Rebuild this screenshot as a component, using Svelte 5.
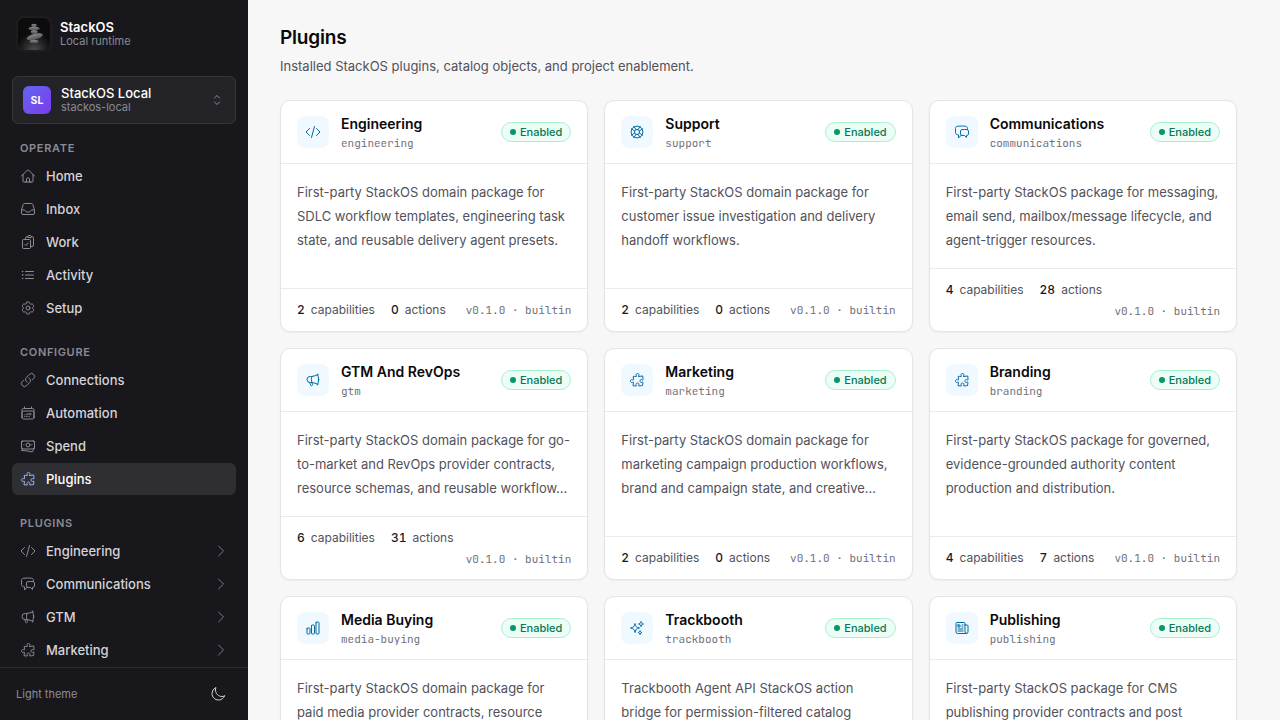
<script>
  // 24x24 outline icons, drawn with a 1.5 stroke
  const icons = {
    home: 'm2.25 12 8.954-8.955c.44-.439 1.152-.439 1.591 0L21.75 12M4.5 9.75v10.125c0 .621.504 1.125 1.125 1.125H9.75v-4.875c0-.621.504-1.125 1.125-1.125h2.25c.621 0 1.125.504 1.125 1.125V21h4.125c.621 0 1.125-.504 1.125-1.125V9.75M8.25 21h8.25',
    inbox: 'M2.25 13.5h3.86a2.25 2.25 0 0 1 2.012 1.244l.256.512a2.25 2.25 0 0 0 2.013 1.244h3.218a2.25 2.25 0 0 0 2.013-1.244l.256-.512a2.25 2.25 0 0 1 2.013-1.244h3.859m-19.5.338V18a2.25 2.25 0 0 0 2.25 2.25h15A2.25 2.25 0 0 0 21.75 18v-4.162c0-.224-.034-.447-.1-.661L19.24 5.338a2.25 2.25 0 0 0-2.15-1.588H6.911a2.25 2.25 0 0 0-2.15 1.588L2.35 13.177a2.25 2.25 0 0 0-.1.661Z',
    work: 'M11.35 3.836c-.065.21-.1.433-.1.664 0 .414.336.75.75.75h4.5a.75.75 0 0 0 .75-.75 2.25 2.25 0 0 0-.1-.664m-5.8 0A2.251 2.251 0 0 1 13.5 2.25H15c1.012 0 1.867.668 2.15 1.586m-5.8 0c-.376.023-.75.05-1.124.08C9.095 4.01 8.25 4.973 8.25 6.108V8.25m8.9-4.414c.376.023.75.05 1.124.08 1.131.094 1.976 1.057 1.976 2.192V16.5A2.25 2.25 0 0 1 18 18.75h-2.25m-7.5-10.5H4.875c-.621 0-1.125.504-1.125 1.125v11.25c0 .621.504 1.125 1.125 1.125h9.75c.621 0 1.125-.504 1.125-1.125V18.75m-7.5-10.5h6.375c.621 0 1.125.504 1.125 1.125v9.375m-8.25-3 1.5 1.5 3-3.75',
    list: 'M8.25 6.75h12M8.25 12h12m-12 5.25h12M3.75 6.75h.007v.008H3.75V6.75Zm.375 0a.375.375 0 1 1-.75 0 .375.375 0 0 1 .75 0ZM3.75 12h.007v.008H3.75V12Zm.375 0a.375.375 0 1 1-.75 0 .375.375 0 0 1 .75 0Zm-.375 5.25h.007v.008H3.75v-.008Zm.375 0a.375.375 0 1 1-.75 0 .375.375 0 0 1 .75 0Z',
    cog: 'M9.594 3.94c.09-.542.56-.94 1.11-.94h2.593c.55 0 1.02.398 1.11.94l.213 1.281c.063.374.313.686.645.87.074.04.147.083.22.127.325.196.72.257 1.075.124l1.217-.456a1.125 1.125 0 0 1 1.37.49l1.296 2.247a1.125 1.125 0 0 1-.26 1.431l-1.003.827c-.293.241-.438.613-.43.992a7.723 7.723 0 0 1 0 .255c-.008.378.137.75.43.991l1.004.827c.424.35.534.955.26 1.43l-1.298 2.247a1.125 1.125 0 0 1-1.369.491l-1.217-.456c-.355-.133-.75-.072-1.076.124a6.47 6.47 0 0 1-.22.128c-.331.183-.581.495-.644.869l-.213 1.281c-.09.543-.56.94-1.11.94h-2.594c-.55 0-1.019-.398-1.11-.94l-.213-1.281c-.062-.374-.312-.686-.644-.87a6.52 6.52 0 0 1-.22-.127c-.325-.196-.72-.257-1.076-.124l-1.217.456a1.125 1.125 0 0 1-1.369-.49l-1.297-2.247a1.125 1.125 0 0 1 .26-1.431l1.004-.827c.292-.24.437-.613.43-.991a6.932 6.932 0 0 1 0-.255c.007-.38-.138-.751-.43-.992l-1.004-.827a1.125 1.125 0 0 1-.26-1.43l1.297-2.247a1.125 1.125 0 0 1 1.37-.491l1.216.456c.356.133.751.072 1.076-.124.072-.044.146-.086.22-.128.332-.183.582-.495.644-.869l.214-1.28ZM15 12a3 3 0 1 1-6 0 3 3 0 0 1 6 0Z',
    link: 'M13.19 8.688a4.5 4.5 0 0 1 1.242 7.244l-4.5 4.5a4.5 4.5 0 0 1-6.364-6.364l1.757-1.757m13.35-.622 1.757-1.757a4.5 4.5 0 0 0-6.364-6.364l-4.5 4.5a4.5 4.5 0 0 0 1.242 7.244',
    calendar: 'M6.75 3v2.25M17.25 3v2.25M3 18.75V7.5a2.25 2.25 0 0 1 2.25-2.25h13.5A2.25 2.25 0 0 1 21 7.5v11.25m-18 0A2.25 2.25 0 0 0 5.25 21h13.5A2.25 2.25 0 0 0 21 18.75m-18 0v-7.5A2.25 2.25 0 0 1 5.25 9h13.5A2.25 2.25 0 0 1 21 11.25v7.5m-9-6h.008v.008H12v-.008ZM12 15h.008v.008H12V15Zm0 2.25h.008v.008H12v-.008ZM9.75 15h.008v.008H9.75V15Zm0 2.25h.008v.008H9.75v-.008ZM7.5 15h.008v.008H7.5V15Zm0 2.25h.008v.008H7.5v-.008Zm6.75-4.5h.008v.008h-.008v-.008Zm0 2.25h.008v.008h-.008V15Zm0 2.25h.008v.008h-.008v-.008Zm2.25-4.5h.008v.008H16.5v-.008Zm0 2.25h.008v.008H16.5V15Z',
    banknotes: 'M2.25 18.75a60.07 60.07 0 0 1 15.797 2.101c.727.198 1.453-.342 1.453-1.096V18.75M3.75 4.5v.75A.75.75 0 0 1 3 6h-.75m0 0v-.375c0-.621.504-1.125 1.125-1.125H20.25M2.25 6v9m18-10.5v.75c0 .414.336.75.75.75h.75m-1.5-1.5h.375c.621 0 1.125.504 1.125 1.125v9.75c0 .621-.504 1.125-1.125 1.125h-.375m1.5-1.5H21a.75.75 0 0 0-.75.75v.75m0 0H3.75m0 0h-.375a1.125 1.125 0 0 1-1.125-1.125V15m1.5 1.5v-.75A.75.75 0 0 0 3 15h-.75M15 10.5a3 3 0 1 1-6 0 3 3 0 0 1 6 0Zm3 0h.008v.008H18V10.5Zm-12 0h.008v.008H6V10.5Z',
    puzzle: 'M14.25 6.087c0-.355.186-.676.401-.959.221-.29.349-.634.349-1.003 0-1.036-1.007-1.875-2.25-1.875s-2.25.84-2.25 1.875c0 .369.128.713.349 1.003.215.283.401.604.401.959v0a.64.64 0 0 1-.657.643 48.39 48.39 0 0 1-4.163-.3c.186 1.613.293 3.25.315 4.907a.656.656 0 0 1-.658.663v0c-.355 0-.676-.186-.959-.401a1.647 1.647 0 0 0-1.003-.349c-1.036 0-1.875 1.007-1.875 2.25s.84 2.25 1.875 2.25c.369 0 .713-.128 1.003-.349.283-.215.604-.401.959-.401v0c.31 0 .555.26.532.57a48.039 48.039 0 0 1-.642 5.056c1.518.19 3.058.309 4.616.354a.64.64 0 0 0 .657-.643v0c0-.355-.186-.676-.401-.959a1.647 1.647 0 0 1-.349-1.003c0-1.035 1.008-1.875 2.25-1.875 1.243 0 2.25.84 2.25 1.875 0 .369-.128.713-.349 1.003-.215.283-.4.604-.4.959v0c0 .333.277.599.61.58a48.1 48.1 0 0 0 5.427-.63 48.05 48.05 0 0 0 .582-4.717.532.532 0 0 0-.533-.57v0c-.355 0-.676.186-.959.401-.29.221-.634.349-1.003.349-1.035 0-1.875-1.007-1.875-2.25s.84-2.25 1.875-2.25c.37 0 .713.128 1.003.349.283.215.604.401.96.401v0a.656.656 0 0 0 .658-.663 48.422 48.422 0 0 0-.37-5.36c-1.886.342-3.81.574-5.766.689a.578.578 0 0 1-.61-.58v0Z',
    code: 'M17.25 6.75 22.5 12l-5.25 5.25m-10.5 0L1.5 12l5.25-5.25m7.5-3-4.5 16.5',
    chat: 'M20.25 8.511c.884.284 1.5 1.128 1.5 2.097v4.286c0 1.136-.847 2.1-1.98 2.193-.34.027-.68.052-1.02.072v3.091l-3-3c-1.354 0-2.694-.055-4.02-.163a2.115 2.115 0 0 1-.825-.242m9.345-8.334a2.126 2.126 0 0 0-.476-.095 48.64 48.64 0 0 0-8.048 0c-1.131.094-1.976 1.057-1.976 2.192v4.286c0 .837.46 1.58 1.155 1.951m9.345-8.334V6.637c0-1.621-1.152-3.026-2.76-3.235A48.455 48.455 0 0 0 11.25 3c-2.115 0-4.198.137-6.24.402-1.608.209-2.76 1.614-2.76 3.235v6.226c0 1.621 1.152 3.026 2.76 3.235.577.075 1.157.14 1.74.194V21l4.155-4.155',
    megaphone: 'M10.34 15.84c-.688-.06-1.386-.09-2.09-.09H7.5a4.5 4.5 0 1 1 0-9h.75c.704 0 1.402-.03 2.09-.09m0 9.18c.253.962.584 1.892.985 2.783.247.55.06 1.21-.463 1.511l-.657.38c-.551.318-1.26.117-1.527-.461a20.845 20.845 0 0 1-1.44-4.282m3.102.069a18.03 18.03 0 0 1-.59-4.59c0-1.586.205-3.124.59-4.59m0 9.18a23.848 23.848 0 0 1 8.835 2.535M10.34 6.66a23.847 23.847 0 0 0 8.835-2.535m0 0A23.74 23.74 0 0 0 18.795 3m.38 1.125a23.91 23.91 0 0 1 1.014 5.395m-1.014 8.855c-.118.38-.245.754-.38 1.125m.38-1.125a23.91 23.91 0 0 0 1.014-5.395m0-3.46c.495.413.811 1.035.811 1.73 0 .695-.316 1.317-.811 1.73m0-3.46a24.347 24.347 0 0 1 0 3.46',
    lifebuoy: 'M16.712 4.33a9.027 9.027 0 0 1 1.652 1.306c.51.51.944 1.064 1.306 1.652M16.712 4.33l-3.448 4.138m3.448-4.138a9.014 9.014 0 0 0-9.424 0M19.67 7.288l-4.138 3.448m4.138-3.448a9.014 9.014 0 0 1 0 9.424m-4.138-5.976a3.736 3.736 0 0 0-.88-1.388 3.737 3.737 0 0 0-1.388-.88m2.268 2.268a3.765 3.765 0 0 1 0 2.528m-2.268-4.796a3.765 3.765 0 0 0-2.528 0m4.796 4.796c-.181.506-.475.982-.88 1.388a3.736 3.736 0 0 1-1.388.88m2.268-2.268 4.138 3.448m0 0a9.027 9.027 0 0 1-1.306 1.652c-.51.51-1.064.944-1.652 1.306m0 0-3.448-4.138m3.448 4.138a9.014 9.014 0 0 1-9.424 0m5.976-4.138a3.765 3.765 0 0 1-2.528 0m0 0a3.736 3.736 0 0 1-1.388-.88 3.737 3.737 0 0 1-.88-1.388m2.268 2.268L7.288 19.67m0 0a9.024 9.024 0 0 1-1.652-1.306 9.027 9.027 0 0 1-1.306-1.652m0 0 4.138-3.448M4.33 16.712a9.014 9.014 0 0 1 0-9.424m4.138 5.976a3.765 3.765 0 0 1 0-2.528m0 0c.181-.506.475-.982.88-1.388a3.736 3.736 0 0 1 1.388-.88m-2.268 2.268L4.33 7.288m6.406 1.18L7.288 4.33m0 0a9.024 9.024 0 0 0-1.652 1.306A9.025 9.025 0 0 0 4.33 7.288',
    chart: 'M3 13.125C3 12.504 3.504 12 4.125 12h2.25c.621 0 1.125.504 1.125 1.125v6.75C7.5 20.496 6.996 21 6.375 21h-2.25A1.125 1.125 0 0 1 3 19.875v-6.75ZM9.75 8.625c0-.621.504-1.125 1.125-1.125h2.25c.621 0 1.125.504 1.125 1.125v11.25c0 .621-.504 1.125-1.125 1.125h-2.25a1.125 1.125 0 0 1-1.125-1.125V8.625ZM16.5 4.125c0-.621.504-1.125 1.125-1.125h2.25C20.496 3 21 3.504 21 4.125v15.75c0 .621-.504 1.125-1.125 1.125h-2.25a1.125 1.125 0 0 1-1.125-1.125V4.125Z',
    sparkles: 'M9.813 15.904 9 18.75l-.813-2.846a4.5 4.5 0 0 0-3.09-3.09L2.25 12l2.846-.813a4.5 4.5 0 0 0 3.09-3.09L9 5.25l.813 2.846a4.5 4.5 0 0 0 3.09 3.09L15.75 12l-2.846.813a4.5 4.5 0 0 0-3.09 3.09ZM18.259 8.715 18 9.75l-.259-1.035a3.375 3.375 0 0 0-2.455-2.456L14.25 6l1.036-.259a3.375 3.375 0 0 0 2.455-2.456L18 2.25l.259 1.035a3.375 3.375 0 0 0 2.456 2.456L21.75 6l-1.035.259a3.375 3.375 0 0 0-2.456 2.456ZM16.894 20.567 16.5 21.75l-.394-1.183a2.25 2.25 0 0 0-1.423-1.423L13.5 18.75l1.183-.394a2.25 2.25 0 0 0 1.423-1.423l.394-1.183.394 1.183a2.25 2.25 0 0 0 1.423 1.423l1.183.394-1.183.394a2.25 2.25 0 0 0-1.423 1.423Z',
    newspaper: 'M12 7.5h1.5m-1.5 3h1.5m-7.5 3h7.5m-7.5 3h7.5m3-9h3.375c.621 0 1.125.504 1.125 1.125V18a2.25 2.25 0 0 1-2.25 2.25M16.5 7.5V18a2.25 2.25 0 0 0 2.25 2.25M16.5 7.5V4.875c0-.621-.504-1.125-1.125-1.125H4.125C3.504 3.75 3 4.254 3 4.875V18a2.25 2.25 0 0 0 2.25 2.25h13.5M6 7.5h3v3H6v-3Z',
    moon: 'M21.752 15.002A9.72 9.72 0 0 1 18 15.75c-5.385 0-9.75-4.365-9.75-9.75 0-1.33.266-2.597.748-3.752A9.753 9.753 0 0 0 3 11.25C3 16.635 7.365 21 12.75 21a9.753 9.753 0 0 0 9.002-5.998Z',
    chevron: 'm8.25 4.5 7.5 7.5-7.5 7.5',
    upDown: 'M8.25 15 12 18.75 15.75 15m-7.5-6L12 5.25 15.75 9'
  };

  const sections = [
    {
      title: 'Operate',
      items: [
        { label: 'Home', icon: 'home' },
        { label: 'Inbox', icon: 'inbox' },
        { label: 'Work', icon: 'work' },
        { label: 'Activity', icon: 'list' },
        { label: 'Setup', icon: 'cog' }
      ]
    },
    {
      title: 'Configure',
      items: [
        { label: 'Connections', icon: 'link' },
        { label: 'Automation', icon: 'calendar' },
        { label: 'Spend', icon: 'banknotes' },
        { label: 'Plugins', icon: 'puzzle' }
      ]
    },
    {
      title: 'Plugins',
      items: [
        { label: 'Engineering', icon: 'code', expandable: true },
        { label: 'Communications', icon: 'chat', expandable: true },
        { label: 'GTM', icon: 'megaphone', expandable: true },
        { label: 'Marketing', icon: 'puzzle', expandable: true }
      ]
    }
  ];

  const plugins = [
    { name: 'Engineering', key: 'engineering', icon: 'code', capabilities: 2, actions: 0, description: 'First-party StackOS domain package for SDLC workflow templates, engineering task state, and reusable delivery agent presets.' },
    { name: 'Support', key: 'support', icon: 'lifebuoy', capabilities: 2, actions: 0, description: 'First-party StackOS domain package for customer issue investigation and delivery handoff workflows.' },
    { name: 'Communications', key: 'communications', icon: 'chat', capabilities: 4, actions: 28, description: 'First-party StackOS package for messaging, email send, mailbox/message lifecycle, and agent-trigger resources.' },
    { name: 'GTM And RevOps', key: 'gtm', icon: 'megaphone', capabilities: 6, actions: 31, description: 'First-party StackOS domain package for go-to-market and RevOps provider contracts, resource schemas, and reusable workflow…' },
    { name: 'Marketing', key: 'marketing', icon: 'puzzle', capabilities: 2, actions: 0, description: 'First-party StackOS domain package for marketing campaign production workflows, brand and campaign state, and creative…' },
    { name: 'Branding', key: 'branding', icon: 'puzzle', capabilities: 4, actions: 7, description: 'First-party StackOS package for governed, evidence-grounded authority content production and distribution.' },
    { name: 'Media Buying', key: 'media-buying', icon: 'chart', description: 'First-party StackOS domain package for paid media provider contracts, resource' },
    { name: 'Trackbooth', key: 'trackbooth', icon: 'sparkles', description: 'Trackbooth Agent API StackOS action bridge for permission-filtered catalog' },
    { name: 'Publishing', key: 'publishing', icon: 'newspaper', description: 'First-party StackOS package for CMS publishing provider contracts and post' }
  ];

  let active = $state('Configure/Plugins');
</script>

{#snippet icon(name)}
  <svg class="icon" viewBox="0 0 24 24" aria-hidden="true">
    <path d={icons[name]} />
  </svg>
{/snippet}

<div class="shell">
  <aside class="sidebar">
    <div class="brand">
      <svg class="logo" viewBox="0 0 32 32" aria-hidden="true">
        <defs>
          <radialGradient id="glow" cx="50%" cy="100%" r="55%">
            <stop offset="0" stop-color="#4a4a4a" />
            <stop offset="1" stop-color="#0c0c0c" />
          </radialGradient>
          <linearGradient id="stone" x1="0" y1="0" x2="0" y2="1">
            <stop offset="0" stop-color="#8a8b90" />
            <stop offset="1" stop-color="#505155" />
          </linearGradient>
        </defs>
        <rect width="32" height="32" rx="6" fill="url(#glow)" />
        <g fill="url(#stone)">
          <ellipse cx="16" cy="7.3" rx="2.8" ry="1.6" />
          <ellipse cx="16" cy="10.4" rx="5.6" ry="1.8" />
          <ellipse cx="16.2" cy="14" rx="3.4" ry="1.9" />
          <ellipse cx="16.8" cy="18.7" rx="8.3" ry="2.9" transform="rotate(-15 16.8 18.7)" />
          <ellipse cx="16" cy="23.4" rx="4.3" ry="1.6" />
        </g>
      </svg>
      <div class="brand-text">
        <strong>StackOS</strong>
        <span>Local runtime</span>
      </div>
    </div>

    <button class="project">
      <span class="avatar">SL</span>
      <span class="project-text">
        <span class="project-name">StackOS Local</span>
        <span class="project-key">stackos-local</span>
      </span>
      {@render icon('upDown')}
    </button>

    <nav>
      {#each sections as section}
        <section>
          <h2>{section.title}</h2>
          {#each section.items as item}
            {@const id = `${section.title}/${item.label}`}
            <button class="nav-item" class:active={active === id} onclick={() => (active = id)}>
              {@render icon(item.icon)}
              <span class="label">{item.label}</span>
              {#if item.expandable}
                <span class="chevron">{@render icon('chevron')}</span>
              {/if}
            </button>
          {/each}
        </section>
      {/each}
    </nav>

    <div class="theme">
      <span>Light theme</span>
      <button aria-label="Toggle theme">{@render icon('moon')}</button>
    </div>
  </aside>

  <main>
    <header>
      <h1>Plugins</h1>
      <p>Installed StackOS plugins, catalog objects, and project enablement.</p>
    </header>

    <div class="grid">
      {#each plugins as plugin}
        <article class="card">
          <div class="card-head">
            <div class="tile">{@render icon(plugin.icon)}</div>
            <div class="card-title">
              <h3>{plugin.name}</h3>
              <code>{plugin.key}</code>
            </div>
            <span class="badge"><i></i>Enabled</span>
          </div>
          <p class="description">{plugin.description}</p>
          {#if plugin.capabilities !== undefined}
            <div class="card-foot">
              <div class="stats">
                <span><b>{plugin.capabilities}</b>capabilities</span>
                <span><b>{plugin.actions}</b>actions</span>
              </div>
              <code>v0.1.0 · builtin</code>
            </div>
          {/if}
        </article>
      {/each}
    </div>
  </main>
</div>

<style>
  :global(body) {
    margin: 0;
    overflow: hidden;
  }

  .shell {
    display: flex;
    height: 100vh;
    overflow: hidden;
    background: #f7f7f7;
    color: #09090b;
    font-family: Inter, sans-serif;
    font-size: 13px;
  }

  .shell * {
    box-sizing: border-box;
  }

  button {
    font: inherit;
    color: inherit;
    border: 0;
    background: none;
    padding: 0;
    cursor: pointer;
  }

  h1, h2, h3, p {
    margin: 0;
  }

  code {
    font-family: "JetBrains Mono", "DejaVu Sans Mono", monospace;
    font-size: 11px;
    line-height: 16px;
    color: #71717a;
  }

  .icon {
    display: block;
    flex: none;
    width: 16px;
    height: 16px;
    fill: none;
    stroke: currentColor;
    stroke-width: 1.5;
    stroke-linecap: round;
    stroke-linejoin: round;
  }

  /* sidebar */
  .sidebar {
    display: flex;
    flex-direction: column;
    flex: none;
    width: 248px;
    background: #18171c;
    color: #d4d4d8;
  }

  .brand {
    display: flex;
    align-items: center;
    gap: 10px;
    flex: none;
    height: 68px;
    padding: 0 18px;
  }

  .logo {
    width: 32px;
    height: 32px;
    border-radius: 6px;
    box-shadow: 0 0 5px rgba(255, 255, 255, 0.08);
  }

  .brand-text,
  .project-text {
    display: flex;
    flex-direction: column;
    text-align: left;
    line-height: 14px;
  }

  .brand-text strong {
    font-size: 13px;
    font-weight: 600;
    color: #fff;
  }

  .brand-text span,
  .project-key {
    font-size: 11px;
    color: #8b8b94;
  }

  .project {
    display: flex;
    align-items: center;
    gap: 10px;
    flex: none;
    height: 48px;
    margin: 8px 12px 0;
    padding: 0 10px;
    border: 1px solid #35353a;
    border-radius: 6px;
    background: #242428;
    color: #8b8b94;
  }

  .project-text {
    flex: 1;
  }

  .project-name {
    font-size: 13px;
    font-weight: 500;
    color: #fff;
  }

  .avatar {
    display: grid;
    place-items: center;
    width: 28px;
    height: 28px;
    border-radius: 6px;
    background: linear-gradient(135deg, #6366f1, #7c3aed);
    color: #fff;
    font-size: 10.5px;
    font-weight: 700;
  }

  nav {
    display: flex;
    flex-direction: column;
    flex: 1;
    gap: 20px;
    min-height: 0;
    overflow: hidden;
    padding: 16px 12px 0;
  }

  section {
    display: flex;
    flex-direction: column;
    flex: none;
    gap: 1px;
  }

  h2 {
    margin-bottom: 3px;
    padding: 0 8px;
    font-size: 11px;
    font-weight: 600;
    line-height: 16px;
    letter-spacing: 0.06em;
    text-transform: uppercase;
    color: #8b8b94;
  }

  .nav-item {
    display: flex;
    align-items: center;
    gap: 10px;
    height: 32px;
    padding: 0 8px;
    border-radius: 6px;
    font-size: 13px;
    font-weight: 500;
    text-align: left;
  }

  .nav-item > :global(.icon) {
    color: #8b8b94;
  }

  .label {
    flex: 1;
  }

  .chevron {
    margin-right: -1px;
    color: #7c7c85;
  }

  .nav-item.active {
    background: #2f2e33;
    color: #fff;
  }

  .nav-item.active > :global(.icon) {
    color: #a5b4fc;
  }

  .theme {
    display: flex;
    align-items: center;
    justify-content: space-between;
    flex: none;
    height: 53px;
    padding: 0 14px 0 16px;
    border-top: 1px solid #2b2a30;
    font-size: 11px;
    color: #8b8b94;
  }

  .theme button {
    display: grid;
    place-items: center;
    width: 32px;
    height: 32px;
    color: #d4d4d8;
  }

  /* page */
  main {
    flex: 1;
    min-width: 0;
    padding: 24px 43px 0 32px;
  }

  header {
    height: 76px;
  }

  h1 {
    font-size: 19px;
    font-weight: 600;
    line-height: 28px;
    letter-spacing: -0.01em;
  }

  header p {
    margin-top: 4px;
    font-size: 13px;
    line-height: 20px;
    color: #52525b;
  }

  .grid {
    display: grid;
    grid-template-columns: repeat(3, minmax(0, 1fr));
    grid-auto-rows: 232px;
    gap: 16px;
  }

  .card {
    display: flex;
    flex-direction: column;
    border: 1px solid #e4e4e7;
    border-radius: 10px;
    background: #fff;
    box-shadow: 0 1px 2px rgba(0, 0, 0, 0.05);
  }

  .card-head {
    display: flex;
    align-items: center;
    gap: 12px;
    flex: none;
    height: 63px;
    padding: 0 16px;
    border-bottom: 1px solid #ebebed;
  }

  .tile {
    display: grid;
    place-items: center;
    width: 32px;
    height: 32px;
    border-radius: 8px;
    background: #f0f9ff;
    color: #0369a1;
  }

  .card-title {
    display: flex;
    flex-direction: column;
    flex: 1;
    min-width: 0;
    gap: 1px;
  }

  h3 {
    font-size: 14px;
    font-weight: 600;
    line-height: 20px;
  }

  .badge {
    display: flex;
    align-items: center;
    gap: 4px;
    height: 20px;
    padding: 0 8px;
    border: 1px solid #a7f3d0;
    border-radius: 10px;
    background: #ecfdf5;
    color: #047857;
    font-size: 11px;
    font-weight: 500;
  }

  .badge i {
    width: 6px;
    height: 6px;
    border-radius: 50%;
    background: #059669;
  }

  .description {
    flex: 1;
    padding: 16px;
    font-size: 13px;
    line-height: 24px;
    color: #52525b;
  }

  .card-foot {
    display: flex;
    flex-wrap: wrap;
    align-items: center;
    gap: 4px 16px;
    flex: none;
    padding: 12px 16px;
    border-top: 1px solid #ebebed;
  }

  .card-foot code {
    margin-left: auto;
  }

  .stats {
    display: flex;
    gap: 16px;
    font-size: 12px;
    line-height: 18px;
    color: #52525b;
  }

  .stats b {
    margin-right: 6px;
    font-weight: 500;
    font-variant-numeric: tabular-nums;
    color: #18181b;
  }
</style>
